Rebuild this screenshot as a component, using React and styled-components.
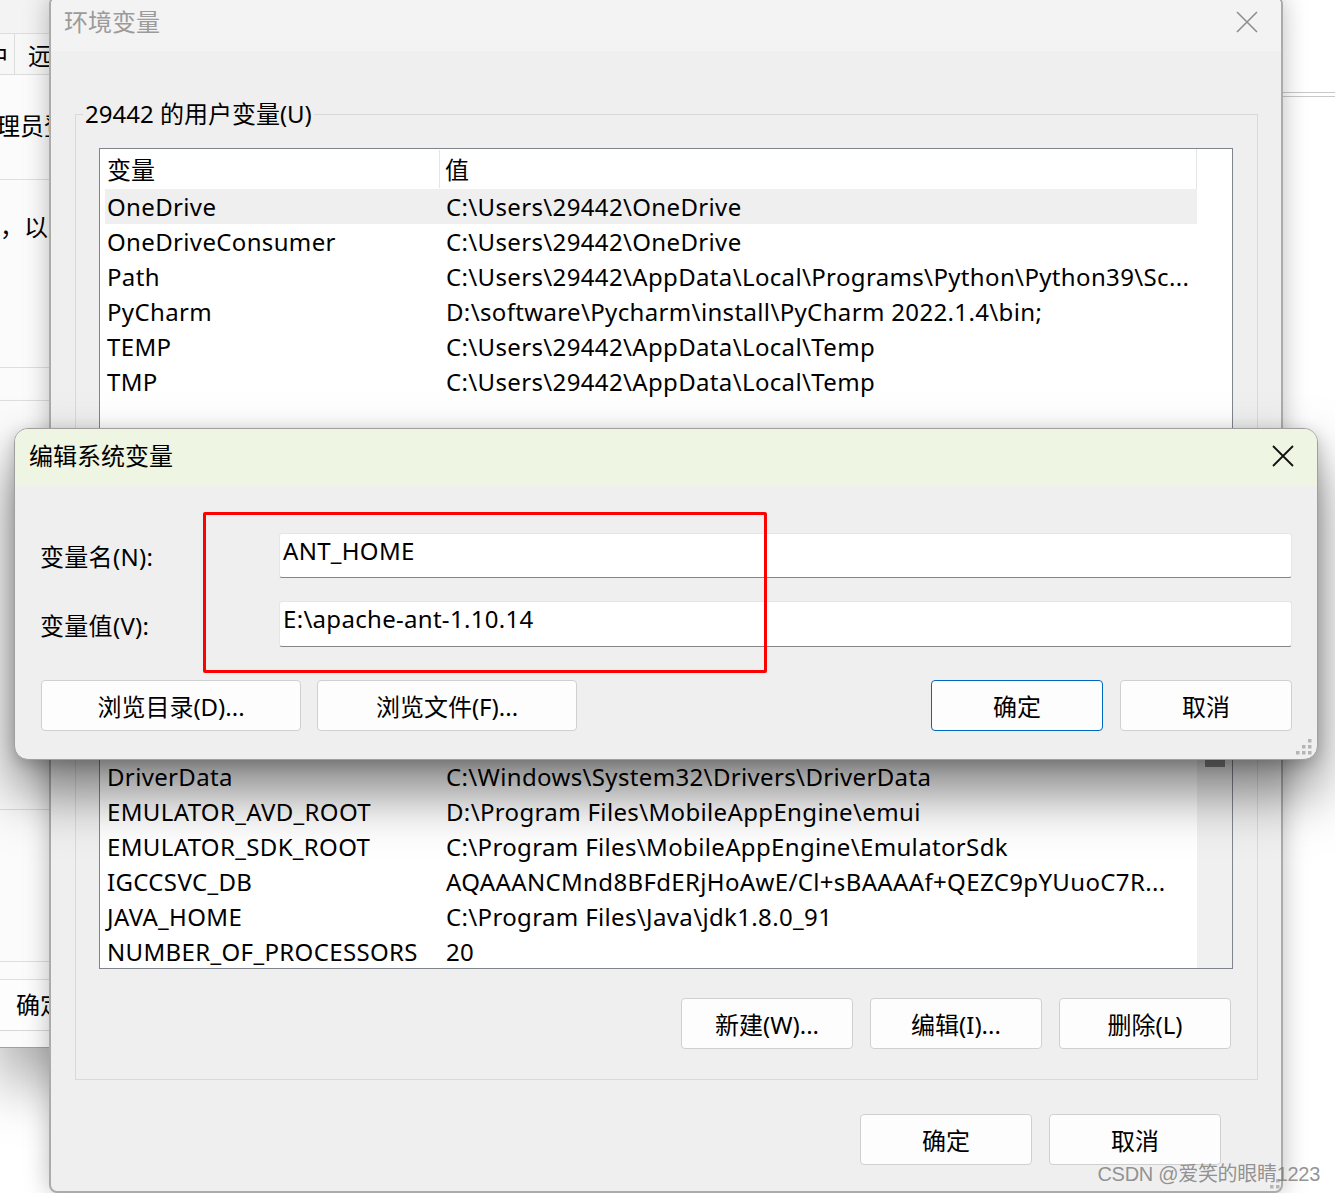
import React from 'react';
import styled, { createGlobalStyle } from 'styled-components';

const FONT = `"Noto Sans", "Noto Sans CJK SC", sans-serif`;

const GlobalStyle = createGlobalStyle`
  html, body { margin: 0; padding: 0; background: #fff; }
  body { font-family: ${FONT}; }
`;

const userVars = [
  { name: 'OneDrive', value: 'C:\\Users\\29442\\OneDrive', selected: true },
  { name: 'OneDriveConsumer', value: 'C:\\Users\\29442\\OneDrive' },
  { name: 'Path', value: 'C:\\Users\\29442\\AppData\\Local\\Programs\\Python\\Python39\\Sc...' },
  { name: 'PyCharm', value: 'D:\\software\\Pycharm\\install\\PyCharm 2022.1.4\\bin;' },
  { name: 'TEMP', value: 'C:\\Users\\29442\\AppData\\Local\\Temp' },
  { name: 'TMP', value: 'C:\\Users\\29442\\AppData\\Local\\Temp' },
];

const systemVars = [
  { name: 'DriverData', value: 'C:\\Windows\\System32\\Drivers\\DriverData' },
  { name: 'EMULATOR_AVD_ROOT', value: 'D:\\Program Files\\MobileAppEngine\\emui' },
  { name: 'EMULATOR_SDK_ROOT', value: 'C:\\Program Files\\MobileAppEngine\\EmulatorSdk' },
  { name: 'IGCCSVC_DB', value: 'AQAAANCMnd8BFdERjHoAwE/Cl+sBAAAAf+QEZC9pYUuoC7R...' },
  { name: 'JAVA_HOME', value: 'C:\\Program Files\\Java\\jdk1.8.0_91' },
  { name: 'NUMBER_OF_PROCESSORS', value: '20' },
];

const Desktop = styled.div`
  position: relative;
  width: 1335px;
  height: 1193px;
  overflow: hidden;
  background: #fff;
  font-family: ${FONT};
  color: #000;
`;

/* window behind, on the left (system properties) */
const BackWindow = styled.div`
  position: absolute;
  left: 0;
  top: 0;
  width: 80px;
  height: 1047px;
  background: #fbfbfb;
  border-bottom: 1px solid #a0a0a0;
  box-shadow: 0 34px 60px rgba(0, 0, 0, 0.36);
  display: flex;
  flex-direction: column;
  overflow: hidden;
`;

const BackTitle = styled.div`
  height: 33px;
  background: #f3f3f3;
  border-bottom: 1px solid #dedede;
`;

const BackTabs = styled.div`
  height: 40px;
  display: flex;
  background: #f7f7f7;
  border-bottom: 1px solid #dcdcdc;
`;

const BackTab = styled.div`
  width: ${(p) => p.$width}px;
  display: flex;
  align-items: center;
  justify-content: ${(p) => (p.$cut ? 'flex-end' : 'flex-start')};
  padding: ${(p) => (p.$cut ? '0 6px 0 0' : '0 0 0 13px')};
  border-right: ${(p) => (p.$cut ? '1px solid #dcdcdc' : 'none')};
  overflow: hidden;
  font-size: 24px;
  white-space: nowrap;
  box-sizing: border-box;
`;

const BackText = styled.div`
  margin-top: ${(p) => p.$gap}px;
  margin-left: ${(p) => p.$indent}px;
  height: 36px;
  line-height: 36px;
  font-size: 24px;
  white-space: nowrap;
`;

const BackRule = styled.div`
  margin-top: ${(p) => p.$gap}px;
  height: 1px;
  background: #dedede;
  flex-shrink: 0;
`;

const BackButton = styled.div`
  height: 50px;
  line-height: 50px;
  padding-left: 16px;
  font-size: 24px;
  background: #fdfdfd;
  border-bottom: 1px solid #d8d8d8;
`;

const RightEdge = styled.div`
  position: absolute;
  left: 1240px;
  top: 92px;
  width: 100px;
  height: 3px;
  border-top: 1px solid #c8c8c8;
  border-bottom: 1px solid #c8c8c8;
`;

/* main "环境变量" window */
const MainWindow = styled.div`
  position: absolute;
  left: 49px;
  top: -4px;
  width: 1234px;
  height: 1197px;
  box-sizing: border-box;
  border: 2px solid #ababab;
  border-radius: 8px;
  background: #efefef;
  box-shadow: 0 0 26px rgba(0, 0, 0, 0.26);
  display: flex;
  flex-direction: column;
  overflow: hidden;
`;

const TitleBar = styled.div`
  height: ${(p) => p.$h}px;
  flex-shrink: 0;
  display: flex;
  align-items: center;
  justify-content: space-between;
  padding: ${(p) => p.$pad};
  background: ${(p) => p.$bg};
  box-sizing: border-box;
`;

const TitleText = styled.div`
  font-size: 24px;
  color: ${(p) => p.$color};
  line-height: 1;
`;

const MainBody = styled.div`
  padding: 47px 23px 0 24px;
  display: flex;
  flex-direction: column;
`;

const Group = styled.fieldset`
  margin: 0;
  width: 1183px;
  box-sizing: border-box;
  border: 1px solid #d9d9d9;
  padding: 18px 24px 30px 23px;
  min-width: 0;
`;

const Legend = styled.legend`
  margin-left: -16px;
  padding: 0 2px;
  font-size: 24px;
  line-height: 32px;
  height: 32px;
`;

const ListBox = styled.div`
  width: 1134px;
  height: 821px;
  box-sizing: border-box;
  border: 1px solid #80848c;
  background: #fff;
  display: flex;
  flex-direction: column;
  overflow: hidden;
`;

const Pane = styled.div`
  display: flex;
  flex-shrink: 0;
  height: ${(p) => p.$h}px;
  overflow: hidden;
`;

const Rows = styled.div`
  width: 1097px;
  padding-top: ${(p) => p.$top || 0}px;
  box-sizing: border-box;
  display: flex;
  flex-direction: column;
`;

const Track = styled.div`
  width: 35px;
  background: ${(p) => (p.$scroll ? '#f0f0f0' : '#fff')};
  display: flex;
  justify-content: center;
`;

const Thumb = styled.div`
  width: 20px;
  height: 47px;
  background: #8b8b8b;
`;

const Header = styled.div`
  height: 40px;
  display: flex;
  border-right: 1px solid #e5e5e5;
  font-size: 24px;
  line-height: 40px;
`;

const HeadCell = styled.div`
  width: ${(p) => (p.$first ? '340px' : 'auto')};
  padding-left: ${(p) => (p.$first ? 7 : 5)}px;
  box-sizing: border-box;
  border-right: ${(p) => (p.$first ? '1px solid #e5e5e5' : 'none')};
  margin: 1px 0;
  line-height: 40px;
`;

const Row = styled.div`
  height: 35px;
  flex-shrink: 0;
  margin-left: 5px;
  display: flex;
  align-items: center;
  font-size: 24px;
  letter-spacing: 0.35px;
  white-space: nowrap;
  background: ${(p) => (p.$selected ? '#efefef' : 'transparent')};
`;

const NameCell = styled.div`
  width: 335px;
  padding-left: 2px;
  box-sizing: border-box;
`;

const ValueCell = styled.div`
  padding-left: 6px;
`;

const ButtonRow = styled.div`
  display: flex;
  justify-content: ${(p) => p.$justify || 'flex-end'};
  gap: ${(p) => p.$gap || 17}px;
  margin-top: ${(p) => p.$top}px;
  padding-right: ${(p) => p.$right || 0}px;
`;

const Button = styled.div`
  width: ${(p) => p.$w || 172}px;
  height: 51px;
  box-sizing: border-box;
  border: 1px solid ${(p) => (p.$primary ? '#0067c0' : '#d0d0d0')};
  border-radius: 4px;
  background: #fdfdfd;
  display: flex;
  align-items: center;
  justify-content: center;
  font-size: 24px;
  margin-left: ${(p) => (p.$push ? 'auto' : '0')};
`;

/* edit dialog */
const Dialog = styled.div`
  position: absolute;
  left: 14px;
  top: 428px;
  width: 1304px;
  height: 332px;
  box-sizing: border-box;
  border: 1px solid #9f9f9f;
  border-radius: 14px;
  background: #efefef;
  box-shadow: 0 32px 56px rgba(0, 0, 0, 0.5), 0 4px 16px rgba(0, 0, 0, 0.2);
  display: flex;
  flex-direction: column;
  overflow: hidden;
`;

const DialogBody = styled.div`
  padding: 47px 25px 0 26px;
  display: flex;
  flex-direction: column;
`;

const FieldRow = styled.div`
  display: flex;
  align-items: center;
  margin-top: ${(p) => p.$top || 0}px;
`;

const Label = styled.div`
  width: 239px;
  margin-left: -1px;
  font-size: 24px;
  letter-spacing: 0.3px;
  white-space: nowrap;
`;

const TextInput = styled.div`
  flex: 1;
  height: ${(p) => p.$h}px;
  box-sizing: border-box;
  background: #fff;
  border: 1px solid #e6e6e6;
  border-bottom: 1px solid #858585;
  border-radius: 3px;
  padding-left: 3px;
  font-size: 24px;
  letter-spacing: 0.3px;
  line-height: 34px;
  white-space: nowrap;
`;

const Annotation = styled.div`
  position: absolute;
  left: 188px;
  top: 83px;
  width: 564px;
  height: 161px;
  box-sizing: border-box;
  border: 3px solid #ff0000;
  border-radius: 2px;
  pointer-events: none;
`;

const Grip = styled.svg`
  position: absolute;
  right: ${(p) => p.$right}px;
  bottom: ${(p) => p.$bottom}px;
`;

const Watermark = styled.div`
  position: absolute;
  right: 15px;
  bottom: 6px;
  font-family: "Liberation Sans", "Noto Sans CJK SC", sans-serif;
  font-size: 20px;
  letter-spacing: -0.3px;
  color: rgba(120, 120, 120, 0.8);
  white-space: nowrap;
`;

const CloseIcon = ({ color, width }) => (
  <svg width="22" height="22" viewBox="0 0 22 22">
    <path d="M1 1 L21 21 M21 1 L1 21" stroke={color} strokeWidth={width} fill="none" />
  </svg>
);

const GripDots = ({ right, bottom }) => (
  <Grip $right={right} $bottom={bottom} width="16" height="16" viewBox="0 0 16 16">
    {[
      [12, 0],
      [6, 6],
      [12, 6],
      [0, 12],
      [6, 12],
      [12, 12],
    ].map(([x, y]) => (
      <rect key={`${x}-${y}`} x={x} y={y} width="3.5" height="3.5" fill="#b5b5b5" />
    ))}
  </Grip>
);

const VarRow = ({ item }) => (
  <Row $selected={item.selected}>
    <NameCell>{item.name}</NameCell>
    <ValueCell>{item.value}</ValueCell>
  </Row>
);

export default function App() {
  return (
    <Desktop>
      <GlobalStyle />

      <BackWindow>
        <BackTitle />
        <BackTabs>
          <BackTab $width={15} $cut>中</BackTab>
          <BackTab $width={65}>远程</BackTab>
        </BackTabs>
        <BackText $gap={33} $indent={-4}>理员登录</BackText>
        <BackRule $gap={35} />
        <BackText $gap={29} $indent={0}>，以及</BackText>
        <BackRule $gap={122} />
        <BackRule $gap={32} />
        <BackRule $gap={408} />
        <BackRule $gap={151} />
        <BackRule $gap={17} />
        <BackButton>确定</BackButton>
      </BackWindow>
      <RightEdge />

      <MainWindow>
        <TitleBar $h={53} $pad="0 23px 6px 13px" $bg="#f3f3f3">
          <TitleText $color="#9b9b9b">环境变量</TitleText>
          <CloseIcon color="#8e8e8e" width={1.6} />
        </TitleBar>
        <MainBody>
          <Group>
            <Legend>29442 的用户变量(U)</Legend>
            <ListBox>
              <Pane $h={250}>
                <Rows>
                  <Header>
                    <HeadCell $first>变量</HeadCell>
                    <HeadCell>值</HeadCell>
                  </Header>
                  {userVars.map((v) => (
                    <VarRow key={v.name} item={v} />
                  ))}
                </Rows>
                <Track />
              </Pane>
              <Pane $h={321}>
                <Rows />
                <Track />
              </Pane>
              <Pane $h={248}>
                <Rows $top={39}>
                  {systemVars.map((v) => (
                    <VarRow key={v.name} item={v} />
                  ))}
                </Rows>
                <Track $scroll>
                  <Thumb />
                </Track>
              </Pane>
            </ListBox>
            <ButtonRow $top={29} $right={2}>
              <Button>新建(W)...</Button>
              <Button>编辑(I)...</Button>
              <Button>删除(L)</Button>
            </ButtonRow>
          </Group>
          <ButtonRow $top={34} $right={37}>
            <Button>确定</Button>
            <Button>取消</Button>
          </ButtonRow>
        </MainBody>
        <GripDots right={1} bottom={-4} />
      </MainWindow>

      <Dialog>
        <TitleBar $h={57} $pad="0 23px 3px 14px" $bg="#eff5e3">
          <TitleText $color="#000">编辑系统变量</TitleText>
          <CloseIcon color="#111" width={1.8} />
        </TitleBar>
        <DialogBody>
          <FieldRow>
            <Label>变量名(N):</Label>
            <TextInput $h={45}>ANT_HOME</TextInput>
          </FieldRow>
          <FieldRow $top={23}>
            <Label>变量值(V):</Label>
            <TextInput $h={46}>E:\apache-ant-1.10.14</TextInput>
          </FieldRow>
          <ButtonRow $top={33} $gap={16} $justify="flex-start">
            <Button $w={260}>浏览目录(D)...</Button>
            <Button $w={260}>浏览文件(F)...</Button>
            <Button $primary $push>确定</Button>
            <Button style={{ marginLeft: 1 }}>取消</Button>
          </ButtonRow>
        </DialogBody>
        <Annotation />
        <GripDots right={5} bottom={4} />
      </Dialog>

      <Watermark>CSDN @爱笑的眼睛1223</Watermark>
    </Desktop>
  );
}
